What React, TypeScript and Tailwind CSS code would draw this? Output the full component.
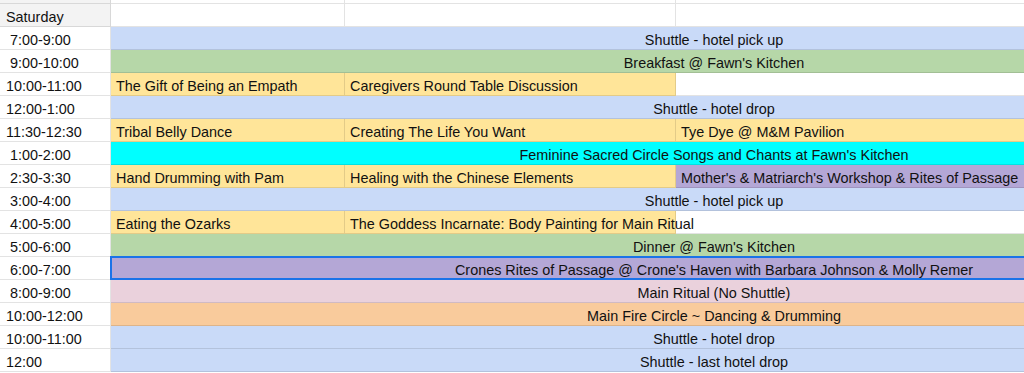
type Cell = { text?: string; bg?: string };
type Row =
  | { time: string; merged: { text: string; bg: string; selected?: boolean } }
  | { time: string; cells: [Cell, Cell, Cell] };

const BLUE = "bg-[#c9daf8]";
const GREEN = "bg-[#b6d7a8]";
const YELLOW = "bg-[#ffe599]";
const CYAN = "bg-[#00ffff]";
const PURPLE = "bg-[#b4a7d6]";
const PINK = "bg-[#ead1dc]";
const ORANGE = "bg-[#f9cb9c]";

const ROWS: Row[] = [
  { time: " 7:00-9:00", merged: { text: "Shuttle - hotel pick up", bg: BLUE } },
  { time: " 9:00-10:00", merged: { text: "Breakfast @ Fawn's Kitchen", bg: GREEN } },
  {
    time: "10:00-11:00",
    cells: [
      { text: "The Gift of Being an Empath", bg: YELLOW },
      { text: "Caregivers Round Table Discussion", bg: YELLOW },
      {},
    ],
  },
  { time: "12:00-1:00", merged: { text: "Shuttle - hotel drop", bg: BLUE } },
  {
    time: "11:30-12:30",
    cells: [
      { text: "Tribal Belly Dance", bg: YELLOW },
      { text: "Creating The Life You Want", bg: YELLOW },
      { text: "Tye Dye @ M&M Pavilion", bg: YELLOW },
    ],
  },
  {
    time: " 1:00-2:00",
    merged: { text: "Feminine Sacred Circle Songs and Chants at Fawn's Kitchen", bg: CYAN },
  },
  {
    time: " 2:30-3:30",
    cells: [
      { text: "Hand Drumming with Pam", bg: YELLOW },
      { text: "Healing with the Chinese Elements", bg: YELLOW },
      { text: "Mother's & Matriarch's Workshop & Rites of Passage", bg: PURPLE },
    ],
  },
  { time: " 3:00-4:00", merged: { text: "Shuttle - hotel pick up", bg: BLUE } },
  {
    time: " 4:00-5:00",
    cells: [
      { text: "Eating the Ozarks", bg: YELLOW },
      { text: "The Goddess Incarnate: Body Painting for Main Ritual", bg: YELLOW },
      {},
    ],
  },
  { time: " 5:00-6:00", merged: { text: "Dinner @ Fawn's Kitchen", bg: GREEN } },
  {
    time: " 6:00-7:00",
    merged: {
      text: "Crones Rites of Passage @ Crone's Haven with Barbara Johnson & Molly Remer",
      bg: PURPLE,
      selected: true,
    },
  },
  { time: " 8:00-9:00", merged: { text: "Main Ritual (No Shuttle)", bg: PINK } },
  { time: "10:00-12:00", merged: { text: "Main Fire Circle ~ Dancing & Drumming", bg: ORANGE } },
  { time: "10:00-11:00", merged: { text: "Shuttle - hotel drop", bg: BLUE } },
  { time: "12:00", merged: { text: "Shuttle - last hotel drop", bg: BLUE } },
];

const widths = ["w-[234px]", "w-[331px]", "w-[641px]"];

export default function App() {
  return (
    <div
      className="w-[1024px] h-[373px] overflow-hidden bg-white text-[14.4px] leading-[16px] text-[#111]"
      style={{ fontFamily: '"Liberation Sans", Arial, sans-serif' }}
    >
      <div className="w-[1317px]">
        {/* cropped row above */}
        <div className="flex h-[4px]">
          <div className="w-[111px] shrink-0 border-r border-b border-black/[0.11] bg-[#f3f3f3]" />
          {widths.map((w) => (
            <div key={w} className={`${w} shrink-0 border-r border-b border-black/[0.11]`} />
          ))}
        </div>

        <div className="flex h-[23px]">
          <div className="w-[111px] shrink-0 flex items-end pb-[1px] pl-[6px] border-r border-b border-black/[0.11] bg-[#f3f3f3]">
            Saturday
          </div>
          {widths.map((w) => (
            <div key={w} className={`${w} shrink-0 border-r border-b border-black/[0.11]`} />
          ))}
        </div>

        {ROWS.map((row, i) => (
          <div key={i} className="flex h-[23px]">
            <div className="w-[111px] shrink-0 flex items-end pb-[1px] pl-[6px] whitespace-pre border-r border-b border-black/[0.11]">
              {row.time}
            </div>
            {"merged" in row ? (
              <div
                className={`relative w-[1206px] shrink-0 flex items-end justify-center pb-[1px] whitespace-nowrap border-b border-black/[0.11] ${row.merged.bg}`}
              >
                {row.merged.text}
                {row.merged.selected ? (
                  <div className="absolute -top-px -left-px -right-px -bottom-px border-2 border-[#1a73e8]" />
                ) : null}
              </div>
            ) : (
              row.cells.map((c, j) => (
                <div
                  key={j}
                  className={`${widths[j]} shrink-0 flex items-end pb-[1px] pl-[5px] whitespace-nowrap border-r border-b border-black/[0.11] ${c.bg ?? ""}`}
                >
                  <span className="relative z-10">{c.text}</span>
                </div>
              ))
            )}
          </div>
        ))}
      </div>
    </div>
  );
}
